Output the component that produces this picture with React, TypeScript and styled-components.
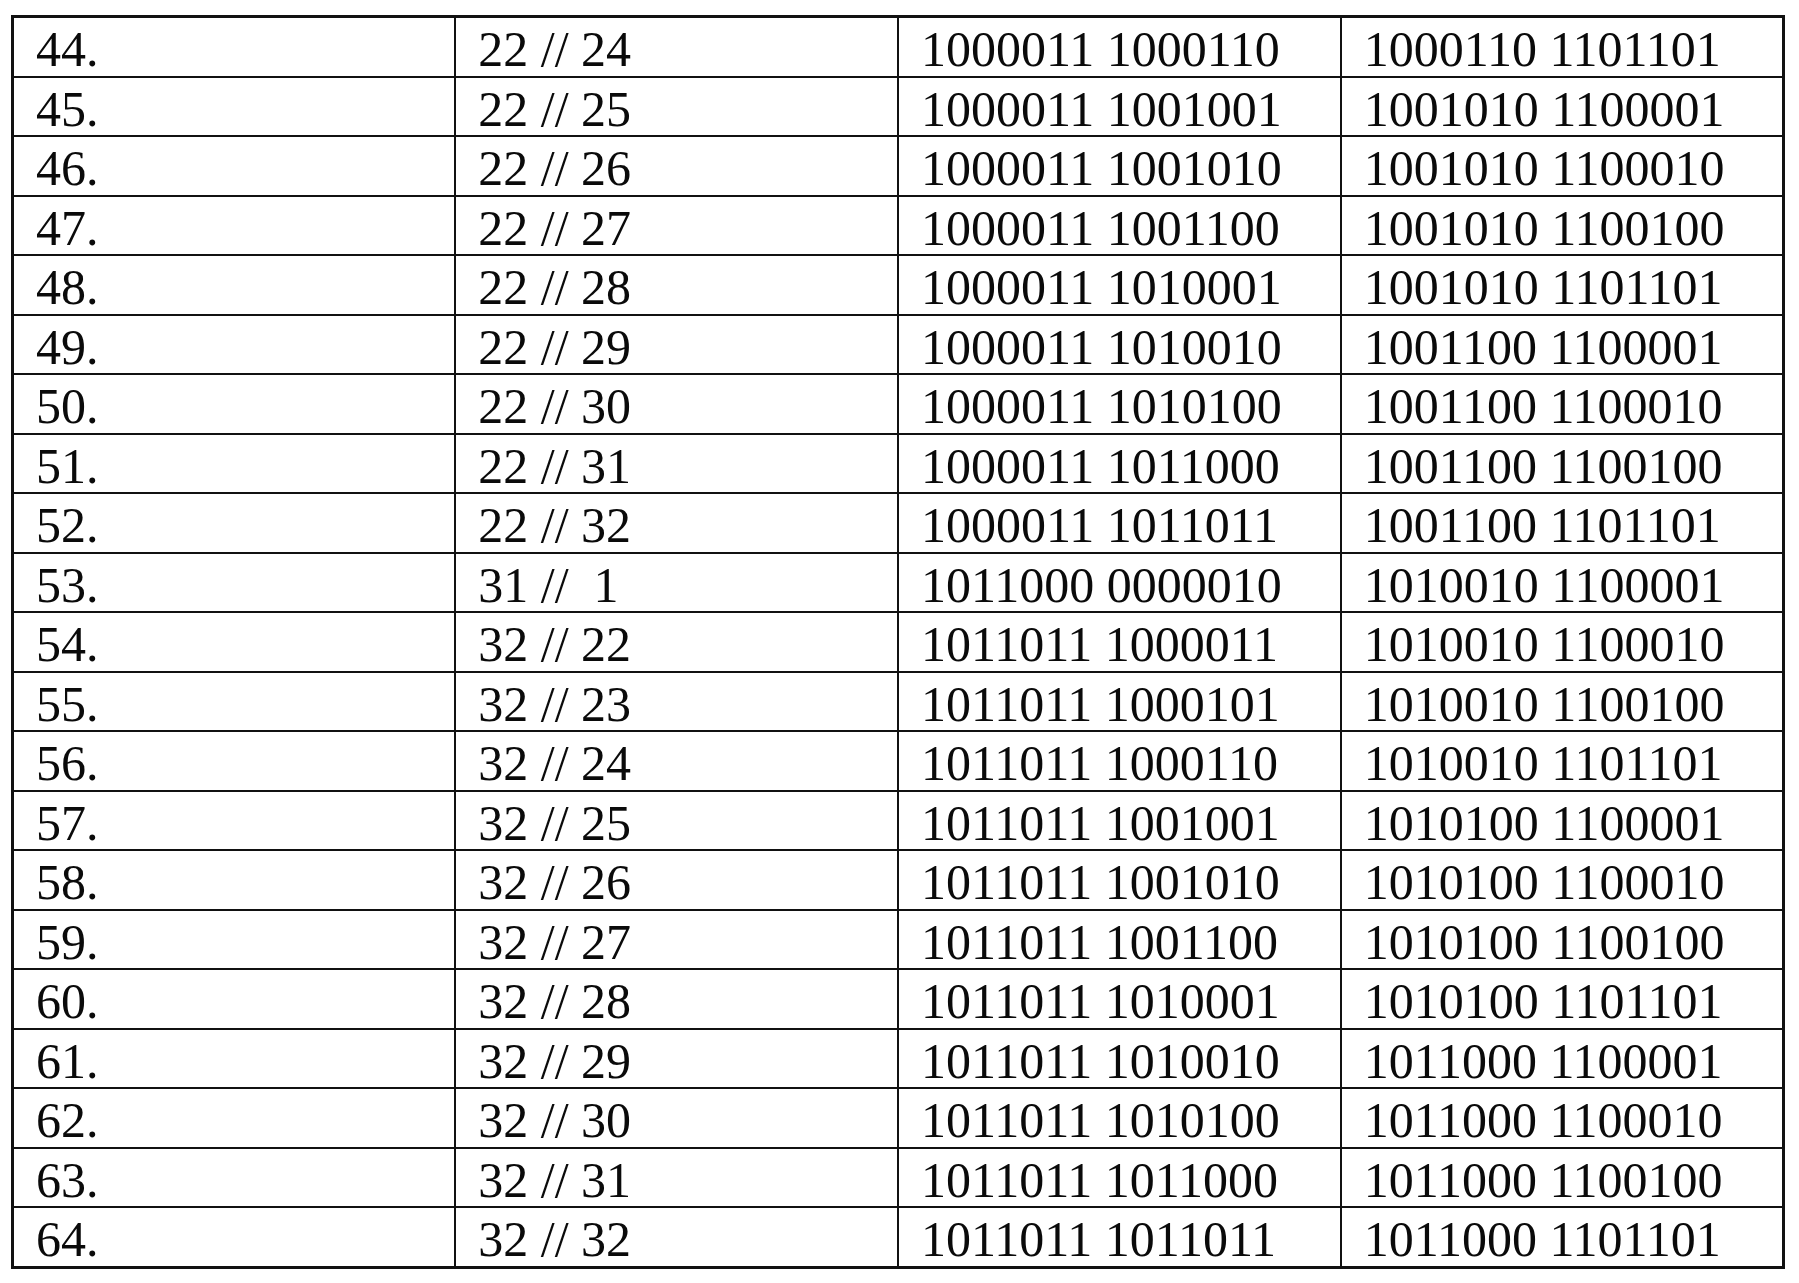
import React from 'react';
import styled, { createGlobalStyle } from 'styled-components';

type Row = {
  no: number;
  pair: string;
  code: string;
  result: string;
};

const rows: Row[] = [
  { no: 44, pair: '22 // 24', code: '1000011 1000110', result: '1000110 1101101' },
  { no: 45, pair: '22 // 25', code: '1000011 1001001', result: '1001010 1100001' },
  { no: 46, pair: '22 // 26', code: '1000011 1001010', result: '1001010 1100010' },
  { no: 47, pair: '22 // 27', code: '1000011 1001100', result: '1001010 1100100' },
  { no: 48, pair: '22 // 28', code: '1000011 1010001', result: '1001010 1101101' },
  { no: 49, pair: '22 // 29', code: '1000011 1010010', result: '1001100 1100001' },
  { no: 50, pair: '22 // 30', code: '1000011 1010100', result: '1001100 1100010' },
  { no: 51, pair: '22 // 31', code: '1000011 1011000', result: '1001100 1100100' },
  { no: 52, pair: '22 // 32', code: '1000011 1011011', result: '1001100 1101101' },
  { no: 53, pair: '31 //  1', code: '1011000 0000010', result: '1010010 1100001' },
  { no: 54, pair: '32 // 22', code: '1011011 1000011', result: '1010010 1100010' },
  { no: 55, pair: '32 // 23', code: '1011011 1000101', result: '1010010 1100100' },
  { no: 56, pair: '32 // 24', code: '1011011 1000110', result: '1010010 1101101' },
  { no: 57, pair: '32 // 25', code: '1011011 1001001', result: '1010100 1100001' },
  { no: 58, pair: '32 // 26', code: '1011011 1001010', result: '1010100 1100010' },
  { no: 59, pair: '32 // 27', code: '1011011 1001100', result: '1010100 1100100' },
  { no: 60, pair: '32 // 28', code: '1011011 1010001', result: '1010100 1101101' },
  { no: 61, pair: '32 // 29', code: '1011011 1010010', result: '1011000 1100001' },
  { no: 62, pair: '32 // 30', code: '1011011 1010100', result: '1011000 1100010' },
  { no: 63, pair: '32 // 31', code: '1011011 1011000', result: '1011000 1100100' },
  { no: 64, pair: '32 // 32', code: '1011011 1011011', result: '1011000 1101101' },
];

const GlobalStyle = createGlobalStyle`
  html, body {
    margin: 0;
    padding: 0;
    background: #ffffff;
  }
  body {
    font-family: "Liberation Serif", "Times New Roman", serif;
    color: #0a0a0a;
  }
`;

const Page = styled.div`
  padding: 15px 0 0 11px;
`;

const Table = styled.table`
  border-collapse: collapse;
  table-layout: fixed;
  width: 1774px;
  border: 3px solid #111;
`;

const Cell = styled.td`
  border: 2px solid #111;
  height: 52.5px;
  padding: 5px 0 0 22px;
  font-size: 50px;
  line-height: 50px;
  white-space: pre;
  vertical-align: middle;
  overflow: hidden;
`;

export default function App() {
  return (
    <Page>
      <GlobalStyle />
      <Table>
        <tbody>
          {rows.map((r) => (
            <tr key={r.no}>
              <Cell>{r.no}.</Cell>
              <Cell>{r.pair}</Cell>
              <Cell>{r.code}</Cell>
              <Cell>{r.result}</Cell>
            </tr>
          ))}
        </tbody>
      </Table>
    </Page>
  );
}
